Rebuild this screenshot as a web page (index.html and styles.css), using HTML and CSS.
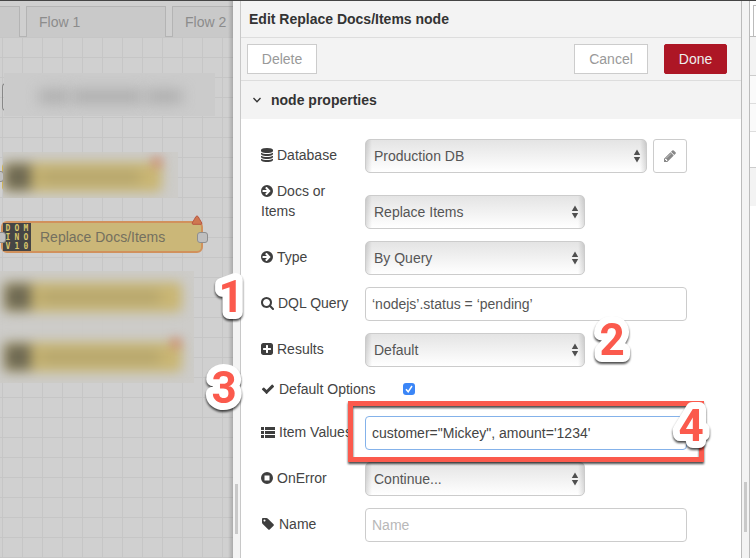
FILE: index.html
```html
<!DOCTYPE html>
<html lang="en">
<head>
<meta charset="utf-8">
<title>Edit Replace Docs/Items node</title>
<link rel="stylesheet" href="styles.css">
</head>
<body>
<svg class="sprite" aria-hidden="true">
  <symbol id="database" viewBox="0 0 1536 1792"><path d="M768 768q237 0 443-43t325-127v170q0 69-103 128t-280 93.500-385 34.500-385-34.500-280-93.500-103-128v-170q119 84 325 127t443 43zm0 768q237 0 443-43t325-127v170q0 69-103 128t-280 93.500-385 34.500-385-34.500-280-93.500-103-128v-170q119 84 325 127t443 43zm0-384q237 0 443-43t325-127v170q0 69-103 128t-280 93.500-385 34.500-385-34.500-280-93.500-103-128v-170q119 84 325 127t443 43zm0-1152q208 0 385 34.500t280 93.500 103 128v128q0 69-103 128t-280 93.500-385 34.500-385-34.500-280-93.500-103-128v-128q0-69 103-128t280-93.500 385-34.500z"/></symbol>
  <symbol id="arrow" viewBox="128 0 1536 1792"><path fill-rule="evenodd" d="M896 128a768 768 0 1 0 0 1536a768 768 0 1 0 0-1536zM384 768h502L697 579q-36-45 0-90l91-91q45-36 90 0l453 453q36 45 0 90l-453 453q-45 36-90 0l-91-91q-36-45 0-90l189-189H384q-64 0-64-64V832q0-64 64-64z"/></symbol>
  <symbol id="search" viewBox="64 0 1664 1792"><path d="M1216 832q0-185-131.500-316.500t-316.500-131.500-316.500 131.500-131.500 316.500 131.500 316.500 316.500 131.500 316.500-131.500 131.500-316.500zm512 832q0 52-38 90t-90 38q-54 0-90-38l-343-342q-179 124-399 124-143 0-273.500-55.500t-225-150-150-225-55.500-273.500 55.500-273.500 150-225 225-150 273.500-55.500 273.500 55.500 225 150 150 225 55.500 273.500q0 220-124 399l343 343q37 37 37 90z"/></symbol>
  <symbol id="plus" viewBox="128 0 1536 1792"><path d="M1408 960v-128q0-26-19-45t-45-19h-320v-320q0-26-19-45t-45-19h-128q-26 0-45 19t-19 45v320h-320q-26 0-45 19t-19 45v128q0 26 19 45t45 19h320v320q0 26 19 45t45 19h128q26 0 45-19t19-45v-320h320q26 0 45-19t19-45zm256-544v960q0 119-84.500 203.500t-203.500 84.500h-960q-119 0-203.500-84.500t-84.500-203.500v-960q0-119 84.500-203.500t203.500-84.500h960q119 0 203.500 84.500t84.500 203.500z"/></symbol>
  <symbol id="check" viewBox="0 0 1792 1792"><path d="M1671 566q0 40-28 68l-724 724-136 136q-28 28-68 28t-68-28l-136-136-362-362q-28-28-28-68t28-68l136-136q28-28 68-28t68 28l294 295 656-657q28-28 68-28t68 28l136 136q28 28 28 68z"/></symbol>
  <symbol id="list" viewBox="0 0 14 14"><path d="M0 2h3v3H0zM4 2h10v3H4zM0 6h3v3H0zM4 6h10v3H4zM0 10h3v3H0zM4 10h10v3H4z"/></symbol>
  <symbol id="stop" viewBox="0 0 12 14"><path fill-rule="evenodd" d="M6 1a6 6 0 1 0 0 12A6 6 0 1 0 6 1zM3.500 4.500h5v5h-5z"/></symbol>
  <symbol id="tag" viewBox="0 0 1792 1792"><path d="M576 448q0-53-37.500-90.500t-90.500-37.500-90.500 37.500-37.500 90.500 37.500 90.500 90.500 37.500 90.500-37.500 37.500-90.500zm1067 576q0 53-37 90l-491 492q-39 37-91 37-53 0-90-37l-715-716q-38-37-64.500-101t-26.500-117v-416q0-52 38-90t90-38h416q53 0 117 26.500t102 64.500l715 714q37 39 37 91z"/></symbol>
  <symbol id="pencil" viewBox="128 0 1536 1792"><path d="M491 1536l91-91-235-235-91 91v107h128v128h107zm523-928q0-22-22-22-10 0-17 7l-542 542q-7 7-7 17 0 22 22 22 10 0 17-7l542-542q7-7 7-17zm-54-192l416 416-832 832h-416v-416zm683 96q0 53-37 90l-166 166-416-416 166-165q36-38 90-38 53 0 91 38l235 234q37 39 37 91z"/></symbol>
  <symbol id="updown" viewBox="0 0 8 14"><path d="M4 0.500L7.200 6H0.800zM4 13.500L7.200 8H0.800z"/></symbol>
</svg>

<div class="app">
  <main class="workspace">
    <nav class="tabs">
      <span class="tab tab-cut"></span>
      <a class="tab tab-full" href="#flow1">Flow 1</a>
      <a class="tab tab-last" href="#flow2">Flow 2</a>
    </nav>
    <div class="canvas">
      <div class="comment-edge"></div>
      <div class="haze haze-comment"><i class="smear smear-a"></i><i class="smear smear-b"></i><i class="smear smear-c"></i></div>
      <div class="node-edge"></div>
      <div class="port port-cut"></div>
      <div class="haze haze-top"><div class="ghost ghost-top"><i class="ghost-icon"></i><i class="ghost-text"></i></div><i class="ghost-alert alert-top"></i></div>
      <div class="node">
        <span class="node-icon"><b>D</b><b>O</b><b>M</b><b>I</b><b>N</b><b>O</b><b>V</b><b>1</b><b>0</b></span>
        <span class="node-label">Replace Docs/Items</span>
        <i class="port port-in"></i>
        <i class="port port-out"></i>
        <svg class="alert" viewBox="0 0 12 10" aria-hidden="true"><path d="M5 1.500Q6 .3 7 1.500L10.800 8Q11 9.200 10 9.300H2Q1 9.200 1.200 8z"/></svg>
      </div>
      <div class="haze haze-low">
        <div class="ghost ghost-mid"><i class="ghost-icon"></i><i class="ghost-text"></i></div>
        <div class="ghost ghost-low"><i class="ghost-icon"></i><i class="ghost-text"></i></div>
        <i class="ghost-alert alert-low"></i>
      </div>
    </div>
  </main>

  <section class="tray">
    <div class="grip"><i class="grip-bar"></i></div>
    <div class="tray-body">
      <h1 class="tray-title">Edit Replace Docs/Items node</h1>
      <div class="toolbar">
        <button class="btn" type="button">Delete</button>
        <span class="spacer"></span>
        <button class="btn btn-cancel" type="button">Cancel</button>
        <button class="btn btn-done" type="button">Done</button>
      </div>
      <h2 class="section-title">
        <svg class="chevron" viewBox="0 0 10 8" aria-hidden="true"><path d="M1.500 2L5 5.800L8.500 2"/></svg>
        node properties
      </h2>
      <form class="form">
        <div class="row row-db">
          <label class="name" for="db"><svg class="icon w12"><use href="#database"/></svg>Database</label>
          <span class="picker grow"><select id="db"><option>Production DB</option></select><svg class="updown"><use href="#updown"/></svg></span>
          <button class="edit" type="button" aria-label="Edit database"><svg class="icon-edit"><use href="#pencil"/></svg></button>
        </div>
        <div class="row row-docs">
          <label class="name wrap" for="docs"><svg class="icon w12"><use href="#arrow"/></svg>Docs or Items</label>
          <span class="picker"><select id="docs"><option>Replace Items</option></select><svg class="updown"><use href="#updown"/></svg></span>
        </div>
        <div class="row">
          <label class="name" for="type"><svg class="icon w12"><use href="#arrow"/></svg>Type</label>
          <span class="picker"><select id="type"><option>By Query</option></select><svg class="updown"><use href="#updown"/></svg></span>
        </div>
        <div class="row">
          <label class="name" for="dql"><svg class="icon w13"><use href="#search"/></svg>DQL Query</label>
          <input class="text" id="dql" type="text" value="‘nodejs’.status = ‘pending’">
          <svg class="mark mark-1"><text x="25" y="42">1</text></svg>
        </div>
        <div class="row">
          <label class="name" for="results"><svg class="icon w12"><use href="#plus"/></svg>Results</label>
          <span class="picker"><select id="results"><option>Default</option></select><svg class="updown"><use href="#updown"/></svg></span>
          <svg class="mark mark-2"><text x="25" y="42">2</text></svg>
        </div>
        <div class="row row-check">
          <label class="name name-check" for="opts"><svg class="icon w14"><use href="#check"/></svg>Default Options</label>
          <span class="tick"><input id="opts" type="checkbox" checked><svg viewBox="0 0 12 12" aria-hidden="true"><path d="M3 6.300L5.200 8.800L9 3"/></svg></span>
          <svg class="mark mark-3"><text x="25" y="42">3</text></svg>
        </div>
        <div class="row">
          <label class="name" for="items"><svg class="icon w14"><use href="#list"/></svg>Item Values</label>
          <input class="text focused" id="items" type="text" value="customer=&quot;Mickey&quot;, amount='1234'">
          <div class="frame"></div>
          <svg class="mark mark-4"><text x="25" y="42">4</text></svg>
        </div>
        <div class="row">
          <label class="name" for="onerror"><svg class="icon w12"><use href="#stop"/></svg>OnError</label>
          <span class="picker"><select id="onerror"><option>Continue...</option></select><svg class="updown"><use href="#updown"/></svg></span>
        </div>
        <div class="row">
          <label class="name" for="nm"><svg class="icon w14"><use href="#tag"/></svg>Name</label>
          <input class="text" id="nm" type="text" placeholder="Name">
        </div>
      </form>
    </div>
  </section>

  <div class="grip grip-right"><i class="grip-bar"></i></div>
  <aside class="sidebar">
    <div class="side-tabs"><i></i></div>
    <div class="side-tools"></div>
    <div class="side-line"></div>
    <div class="side-line"></div>
    <div class="side-cell"></div>
    <div class="side-head"></div>
  </aside>
</div>
</body>
</html>
```
FILE: styles.css
```css
* { box-sizing: border-box; }
body {
  margin: 0;
  font: 14px/20px "Liberation Sans", Arial, sans-serif;
  color: #444;
  overflow: hidden;
}
.sprite { position: absolute; width: 0; height: 0; }
.app {
  display: flex;
  height: 100vh;
  border-top: 1px solid #444;
  background: #fff;
}

/* Workspace */
.workspace {
  flex: 1;
  min-width: 0;
  display: flex;
  flex-direction: column;
  overflow: hidden;
  position: relative;
  background: #cfcfcf;
}
.workspace::after {
  content: "";
  position: absolute;
  inset: 0 0 0 auto;
  width: 5px;
  background: linear-gradient(to right, rgba(0,0,0,0), rgba(0,0,0,.18));
}
.tabs {
  display: flex;
  gap: 6px;
  height: 36px;
  padding-top: 5px;
  border-bottom: 1px solid #b4b4b4;
  flex: none;
}
.tab {
  flex: none;
  height: 31px;
  border: 1px solid #b4b4b4;
  border-bottom: 0;
  background: #c9c9c9;
  color: #8c8c8c;
  line-height: 30px;
  padding-left: 12px;
  text-decoration: none;
}
.tab-cut { width: 20px; border-left: 0; }
.tab-full { width: 140px; }
.tab-last { width: 142px; }
.canvas {
  flex: 1;
  position: relative;
  background-color: #d0d0d0;
  background-image:
    linear-gradient(to right, #c6c6c6 1px, transparent 1px),
    linear-gradient(#c6c6c6 1px, transparent 1px);
  background-size: 20px 20px;
  background-position: 2px 0;
}
.comment-edge {
  position: absolute;
  left: 2px;
  top: 46px;
  width: 8px;
  height: 28px;
  border: 1px solid #888;
  border-right: 0;
  border-radius: 4px 0 0 4px;
}
.haze { position: absolute; overflow: hidden; background: rgba(204,203,200,.94); }
.haze-comment { left: 4px; top: 36px; width: 211px; height: 43px; background: #cbcbcb; }
.smear { position: absolute; top: 17px; height: 13px; background: #acacac; filter: blur(7px); }
.smear-a { left: 35px; width: 30px; }
.smear-b { left: 68px; width: 70px; }
.smear-c { left: 142px; width: 36px; }
.haze-top { left: 3px; top: 115px; width: 175px; height: 46px; }
.haze-low { left: 0; top: 234px; width: 194px; height: 112px; }
.ghost {
  position: absolute;
  height: 30px;
  background: #c9b674;
  border-radius: 5px;
  filter: blur(6px);
}
.ghost-top { left: 0; top: 10px; width: 159px; }
.ghost-mid { left: 3px; top: 11px; width: 179px; }
.ghost-low { left: 3px; top: 71px; width: 179px; }
.ghost-icon { position: absolute; left: 2px; top: 2px; width: 26px; height: 26px; background: #6d6852; filter: blur(2px); }
.ghost-text { position: absolute; left: 38px; right: 22px; top: 9px; height: 12px; background: #b3a46d; filter: blur(3px); }
.ghost-alert { position: absolute; width: 12px; height: 12px; background: #cd7862; filter: blur(5px); opacity: .5; }
.alert-top { left: 148px; top: 4px; }
.alert-low { left: 170px; top: 66px; }
.node-edge { position: absolute; left: 2px; top: 125px; width: 6px; height: 30px; border: 1px solid #cdb257; border-radius: 5px 0 0 5px; }
.node {
  position: absolute;
  left: 1px;
  top: 184px;
  width: 202px;
  height: 32px;
  display: flex;
  align-items: center;
  gap: 9px;
  border: 2px solid #d1915c;
  border-radius: 6px;
  background: #cbb778;
  color: #74705f;
}
.node-icon {
  width: 28px;
  height: 28px;
  display: grid;
  grid-template: repeat(3, 9px) / repeat(3, 9px);
  justify-content: center;
  align-content: center;
  background: #454545;
  color: #d8c66b;
  font: bold 8px/9px "DejaVu Sans Mono", monospace;
  text-align: center;
}
.port {
  position: absolute;
  width: 11px;
  height: 11px;
  border: 1px solid #8e8e8e;
  border-radius: 3px;
  background: #bfbfbf;
}
.port-in { left: -8px; top: 9px; }
.port-out { left: 194px; top: 9px; }
.port-cut { left: -7px; top: 134px; }
.alert { position: absolute; left: 188px; top: -8px; width: 12px; height: 10px; fill: #cf7750; stroke: #b85742; }

/* Edit tray */
.tray { flex: none; width: 508px; display: flex; position: relative; z-index: 1; }
.grip {
  flex: none;
  width: 8px;
  background: #f3f3f3;
  border-right: 1px solid #c8c8c8;
  padding: 483px 2px 0;
}
.grip-right { width: 9px; border-left: 1px solid #bbb; border-right-color: #bbb; padding-top: 481px; }
.grip-bar { display: block; width: 3px; height: 50px; background: #c9c9c9; }
.tray-body { flex: 1; min-width: 0; background: #fff; color: #444; }
.tray-title, .section-title { margin: 0; font-size: 14px; font-weight: bold; color: #333; background: #f3f3f3; }
.tray-title { padding: 8px; border-bottom: 1px solid #ddd; }
.toolbar {
  display: flex;
  align-items: center;
  height: 43px;
  padding: 0 14px 0 6px;
  background: #f3f3f3;
  border-bottom: 1px solid #ddd;
}
.spacer { flex: 1; }
.btn {
  height: 30px;
  width: 70px;
  padding: 0;
  border: 1px solid #ccc;
  background: #fff;
  color: #999;
  font: inherit;
}
.btn-cancel { width: 74px; }
.btn-done { width: 63px; margin-left: 16px; border-color: #ad1625; border-radius: 2px; background: #ad1625; color: #eee; }
.section-title { display: flex; align-items: center; gap: 9px; height: 38px; padding-left: 11px; }
.chevron { width: 10px; height: 8px; fill: none; stroke: #333; stroke-width: 1.3; }
.form { padding: 20px 54px 0 20px; }
.row { display: flex; align-items: center; position: relative; margin-bottom: 12px; }
.row-db { margin-bottom: 8px; }
.row-docs { height: 48px; align-items: flex-end; }
.row-check { height: 25px; align-items: flex-start; }
.name { flex: none; width: 104px; padding-bottom: 2px; white-space: nowrap; }
.wrap { align-self: flex-start; padding-right: 34px; white-space: normal; }
.name-check { width: 142px; }
.icon { height: 14px; margin-right: 4px; vertical-align: -2px; fill: #3e3e3e; }
.w12 { width: 12px; }
.w13 { width: 13px; }
.w14 { width: 14px; }
.picker { position: relative; width: 220px; height: 34px; }
.grow { flex: 1; }
select {
  appearance: none;
  width: 100%;
  height: 34px;
  padding: 0 8px;
  border: 1px solid #ccc;
  border-radius: 5px;
  background:
    linear-gradient(to right, rgba(0,0,0,.12), transparent 6px, transparent calc(100% - 6px), rgba(0,0,0,.12)),
    linear-gradient(#e4e4e4, #fff);
  color: #555;
  font: inherit;
}
.updown { position: absolute; right: 6px; top: 10px; width: 8px; height: 14px; fill: #505050; pointer-events: none; }
.edit {
  width: 34px;
  height: 34px;
  margin-left: 6px;
  padding: 0;
  border: 1px solid #ccc;
  border-radius: 3px;
  background: #fff;
}
.icon-edit { display: block; margin: 0 auto; width: 12px; height: 14px; fill: #888; }
.text {
  flex: 1;
  min-width: 0;
  height: 34px;
  padding: 0 6px;
  border: 1px solid #ccc;
  border-radius: 4px;
  background: #fff;
  color: #555;
  font: inherit;
}
.text::placeholder { color: #b8b8b8; opacity: 1; }
.focused { border-color: #84b2ea; color: #444; }
.tick { position: relative; width: 12px; height: 12px; margin-top: 4px; }
.tick input { appearance: none; display: block; width: 12px; height: 12px; margin: 0; border-radius: 3px; background: #3b86f7; }
.tick svg { position: absolute; inset: 0; fill: none; stroke: #fff; stroke-width: 1.5; pointer-events: none; }

/* Callouts */
.frame {
  position: absolute;
  z-index: 1;
  inset: -15px -17px -12px 87px;
  border: 5px solid #fb5a4d;
  filter: drop-shadow(0 2px 1px rgba(0,0,0,.7));
  pointer-events: none;
}
.mark {
  position: absolute;
  z-index: 2;
  width: 50px;
  height: 60px;
  overflow: visible;
  pointer-events: none;
  filter: drop-shadow(0 2px 1px rgba(0,0,0,.7));
}
.mark text {
  font: bold 44px Roboto, "Liberation Sans", sans-serif;
  text-anchor: middle;
  fill: #fb5a4d;
  stroke: #fff;
  stroke-width: 14px;
  stroke-linejoin: round;
  paint-order: stroke;
}
.mark-1 { left: -55px; top: -17px; }
.mark-2 { left: 326px; top: -20px; }
.mark-3 { left: -62px; top: -18px; }
.mark-4 { right: -29px; top: -17px; }

/* Sidebar sliver */
.sidebar { flex: none; width: 6px; background: #fff; }
.side-tabs { height: 36px; padding: 4px 0 0 3px; border-bottom: 1px solid #bbb; }
.side-tabs i { display: block; height: 31px; border: 1px solid #bbb; border-width: 1px 0 0 1px; }
.side-tools { height: 39px; background: #f3f3f3; border-bottom: 1px solid #ccc; }
.side-line { height: 28px; background: #fafafa; border-bottom: 1px solid #ddd; }
.side-cell { height: 36px; border-bottom: 1px solid #ccc; }
.side-head { height: 38px; background: #f3f3f3; }
```
